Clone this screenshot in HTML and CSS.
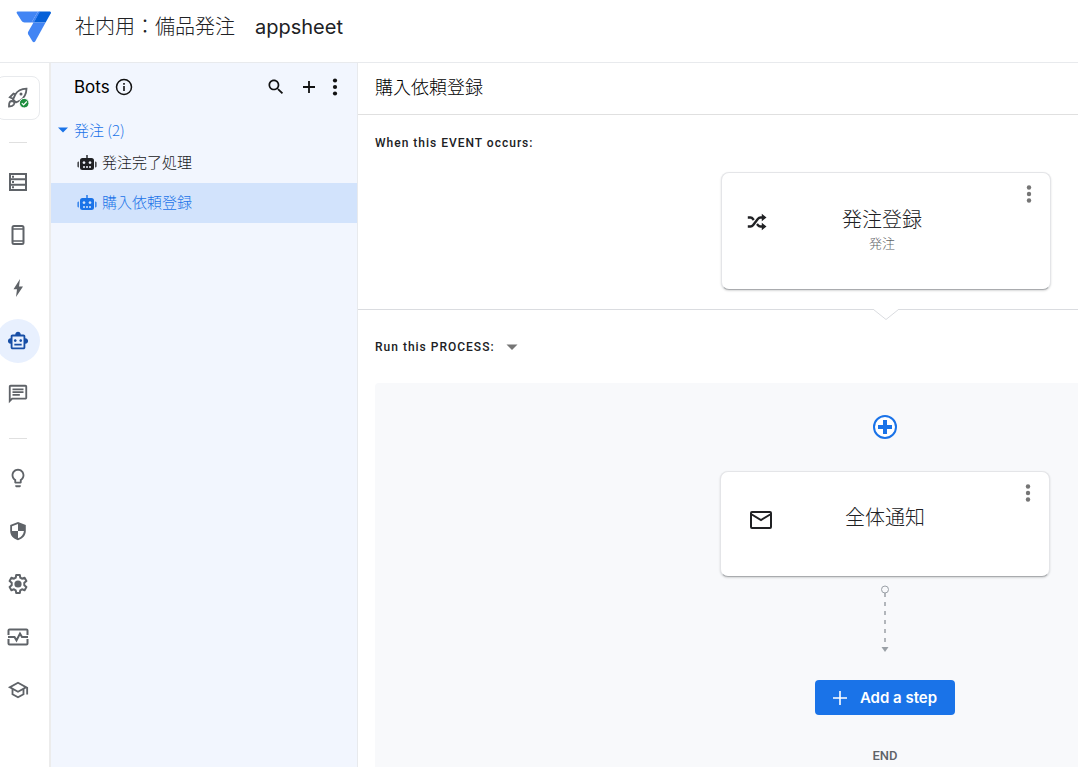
FILE: index.html
```html
<!DOCTYPE html>
<html lang="ja">
<head>
<meta charset="utf-8">
<meta name="viewport" content="width=device-width, initial-scale=1">
<title>AppSheet</title>
<link rel="stylesheet" href="styles.css">
</head>
<body>
<header class="topbar">
  <svg class="logo" width="36" height="32" viewBox="0 0 36 32" aria-label="AppSheet" role="img">
    <path fill="#4285f4" d="M1.600.500H22L15.500 11.500H8.500Q6.500 11.500 5.500 9.800L.800 2.200Q0 .5 1.600.500z"/>
    <path fill="#0560d8" d="M23.500.500H33.800Q35.600.700 34.800 2.300L29.600 11.500H17.500z"/>
    <path fill="#4285f4" d="M22 .500H24L18 11.500H15.500z"/>
    <path fill="#4285f4" d="M17.500 11.500H29.600L19.300 30.200Q17.900 32.200 16.400 30.200L12.200 23.200Q11.600 22 12.200 20.800z"/>
  </svg>
  <h1 class="app-title">社内用：備品発注　<span class="latin">appsheet</span></h1>
</header>
<div class="workspace">
  <nav class="rail" aria-label="Main">
    <button class="rail-item rail-deploy" aria-label="Deploy">
      <svg width="22" height="24" viewBox="0 0 22 24" fill="none" stroke="#5f6368" stroke-width="1.800">
        <path d="M6 13.500L8.300 8.500C10.500 4.700 14.500 2.900 19.500 2.700C19.300 7.700 17.300 11.700 13.500 14.200L9 16.500zM8.500 8.300L6.500 7.600L2.800 11.300L6.500 13M13.800 14.200L14.300 16"/>
        <path d="M2 20.500C1.900 17.500 2.600 15.200 4.600 15C7 15 7.900 16.700 6.900 18.400C6 19.800 4.200 20.400 2 20.500z"/>
        <circle cx="14" cy="8" r="1.500" fill="#5f6368" stroke="none"/>
        <circle cx="17.200" cy="17.200" r="4.800" fill="#1e8e3e" stroke="#fff" stroke-width="1"/>
        <path stroke="#fff" stroke-width="1.200" d="M14.800 17.200l1.800 1.800 3.200-3.500"/>
      </svg>
    </button>
    <hr class="rail-rule">
    <button class="rail-item" aria-label="Data">
      <svg width="22" height="22" viewBox="0 0 22 22"><path fill="none" stroke="#5f6368" stroke-width="2" d="M3 3h16v16H3zM3 8.300h16M3 13.700h16"/><path fill="#5f6368" d="M5 4.700h2v2H5zM5 10h2v2H5zM5 15.300h2v2H5z"/></svg>
    </button>
    <button class="rail-item" aria-label="Views">
      <svg width="22" height="22" viewBox="0 0 22 22"><rect x="5.500" y="2" width="11" height="18" rx="1.500" fill="none" stroke="#5f6368" stroke-width="2"/><path stroke="#5f6368" stroke-width="1.500" d="M5 5h12M5 17h12"/></svg>
    </button>
    <button class="rail-item" aria-label="Actions">
      <svg width="22" height="22" viewBox="0 0 22 22"><path fill="#5f6368" d="M13 2L6.500 12.300H10L9 20l7-10.500h-4z"/></svg>
    </button>
    <button class="rail-item is-active" aria-label="Automation" aria-current="page">
      <svg width="22" height="22" viewBox="0 0 24 24"><path fill="#174ea6" d="M20 9V7c0-1.100-.900-2-2-2h-3c0-1.660-1.340-3-3-3S9 3.340 9 5H6c-1.100 0-2 .900-2 2v2c-1.660 0-3 1.340-3 3s1.340 3 3 3v4c0 1.100.900 2 2 2h12c1.100 0 2-.900 2-2v-4c1.660 0 3-1.340 3-3s-1.340-3-3-3zm-2 10H6V7h12v12zm-9-6c-.830 0-1.500-.670-1.500-1.500S8.170 10 9 10s1.500.670 1.500 1.500S9.830 13 9 13zm7.500-1.500c0 .830-.670 1.500-1.500 1.500s-1.500-.670-1.500-1.500.670-1.500 1.500-1.500 1.500.670 1.500 1.500zM8 15h8v2H8v-2z"/></svg>
    </button>
    <button class="rail-item" aria-label="Chat">
      <svg width="22" height="22" viewBox="0 0 24 24"><path fill="#5f6368" d="M4 4h16v12H5.170L4 17.170V4m0-2c-1.100 0-1.990.900-1.990 2L2 22l4-4h14c1.100 0 2-.900 2-2V4c0-1.100-.900-2-2-2H4zm2 10h8v2H6v-2zm0-3h12v2H6V9zm0-3h12v2H6V6z"/></svg>
    </button>
    <hr class="rail-rule">
    <button class="rail-item" aria-label="Intelligence">
      <svg width="22" height="22" viewBox="0 0 24 24"><path fill="#5f6368" d="M9 21c0 .550.450 1 1 1h4c.550 0 1-.450 1-1v-1H9v1zm3-19C8.140 2 5 5.140 5 9c0 2.380 1.190 4.470 3 5.740V17c0 .550.450 1 1 1h6c.550 0 1-.450 1-1v-2.260c1.810-1.270 3-3.360 3-5.740 0-3.860-3.140-7-7-7zm2.850 11.100l-.850.600V16h-4v-2.300l-.850-.600C7.800 12.160 7 10.630 7 9c0-2.760 2.240-5 5-5s5 2.240 5 5c0 1.630-.800 3.160-2.150 4.100z"/></svg>
    </button>
    <button class="rail-item" aria-label="Security">
      <svg width="22" height="22" viewBox="0 0 24 24"><path fill="#5f6368" d="M12 2.200L3.500 5.500V12c0 4.700 3.300 8.600 8.500 10 5.200-1.400 8.500-5.300 8.500-10V5.500zM12 12h6.500c-.500 3.700-2.800 6.700-6.500 8v-8H5.500V6.800L12 4.300z"/></svg>
    </button>
    <button class="rail-item" aria-label="Settings">
      <svg width="24" height="24" viewBox="0 0 24 24"><path fill="none" stroke="#5f6368" stroke-width="2" stroke-linejoin="round" d="M10.200 3h3.600l.500 2.700 1.700 1 2.600-.900 1.800 3.100-2.100 1.800v2.600l2.100 1.800-1.800 3.100-2.600-.900-1.700 1-.500 2.700h-3.600l-.500-2.700-1.700-1-2.600.900-1.800-3.100 2.100-1.800v-2.600L3.600 8.900l1.800-3.100 2.600.900 1.700-1z"/><circle cx="12" cy="12" r="3.600" fill="#5f6368"/></svg>
    </button>
    <button class="rail-item" aria-label="Manage">
      <svg width="24" height="24" viewBox="0 0 24 24" fill="none" stroke="#5f6368" stroke-width="2"><path d="M2.500 10V5.500q0-1 1-1h17q1 0 1 1V10M2.500 14v4.500q0 1 1 1h17q1 0 1-1V14M2 12h6.500l2 3.500 3.500-7 2 3.500h6"/></svg>
    </button>
    <button class="rail-item" aria-label="Learn">
      <svg width="22" height="22" viewBox="0 0 24 24"><path fill="#5f6368" d="M12 3L1 9l4 2.180v6L12 21l7-3.820v-6l2-1.090V17h2V9L12 3zm6.820 6L12 12.720 5.180 9 12 5.280 18.820 9zM17 15.990l-5 2.730-5-2.730v-3.720L12 15l5-2.730v3.720z"/></svg>
    </button>
  </nav>

  <aside class="bots">
    <div class="bots-head">
      <h2 class="bots-title">Bots</h2>
      <button class="icon-btn" aria-label="About bots">
        <svg width="18" height="18" viewBox="0 0 18 18"><circle cx="9" cy="9" r="7.500" fill="none" stroke="#111" stroke-width="1.500"/><path fill="#111" d="M8.200 8h1.600v5H8.200zM8.200 5h1.600v1.700H8.200z"/></svg>
      </button>
      <div class="bots-tools">
        <button class="icon-btn" aria-label="Search">
          <svg width="20" height="20" viewBox="0 0 24 24"><path fill="#111" d="M15.500 14h-.790l-.280-.270C15.410 12.590 16 11.110 16 9.500 16 5.910 13.090 3 9.500 3S3 5.910 3 9.500 5.910 16 9.500 16c1.610 0 3.090-.590 4.230-1.570l.270.280v.790l5 4.990L20.490 19l-4.990-5zm-6 0C7.010 14 5 11.990 5 9.500S7.010 5 9.500 5 14 7.010 14 9.500 11.990 14 9.500 14z"/></svg>
        </button>
        <button class="icon-btn" aria-label="Create bot">
          <svg width="20" height="20" viewBox="0 0 20 20"><path stroke="#111" stroke-width="1.800" d="M10 4v12M4 10h12"/></svg>
        </button>
        <button class="icon-btn" aria-label="More">
          <svg width="6" height="20" viewBox="0 0 6 20" fill="#111"><circle cx="3" cy="3.500" r="2.100"/><circle cx="3" cy="10" r="2.100"/><circle cx="3" cy="16.500" r="2.100"/></svg>
        </button>
      </div>
    </div>
    <button class="group" aria-expanded="true">
      <svg width="10" height="6" viewBox="0 0 10 6"><path fill="#1a73e8" d="M0 .500h10L5 5.500z"/></svg>
      <span>発注 (2)</span>
    </button>
    <ul class="bot-list">
      <li><a class="bot" href="#">
        <svg class="bot-icon" width="20" height="16" viewBox="0 0 20 16"><path fill="currentColor" fill-rule="evenodd" d="M9.300 0h1.400v3H14.500q2.500 0 2.500 2.500v7q0 2.500-2.500 2.500h-9q-2.500 0-2.500-2.500v-7q0-2.500 2.500-2.500h3.800zM.500 7.500Q.700 6.500 1.800 6.500V12.500Q.700 12.500.500 11.500zM19.500 7.500Q19.300 6.500 18.200 6.500V12.500Q19.300 12.500 19.500 11.500zM7 6.200a1.400 1.400 0 1 0 .010 0zM13 6.200a1.400 1.400 0 1 0 .010 0zM6 11.300V12.800h2v-1.500zM9 11.300V12.800h2v-1.500zM12 11.300V12.800h2v-1.500z"/></svg>
        <span>発注完了処理</span></a></li>
      <li><a class="bot is-selected" href="#" aria-current="true">
        <svg class="bot-icon" width="20" height="16" viewBox="0 0 20 16"><path fill="currentColor" fill-rule="evenodd" d="M9.300 0h1.400v3H14.500q2.500 0 2.500 2.500v7q0 2.500-2.500 2.500h-9q-2.500 0-2.500-2.500v-7q0-2.500 2.500-2.500h3.800zM.500 7.500Q.700 6.500 1.800 6.500V12.500Q.700 12.500.500 11.500zM19.500 7.500Q19.300 6.500 18.200 6.500V12.500Q19.300 12.500 19.500 11.500zM7 6.200a1.400 1.400 0 1 0 .010 0zM13 6.200a1.400 1.400 0 1 0 .010 0zM6 11.300V12.800h2v-1.500zM9 11.300V12.800h2v-1.500zM12 11.300V12.800h2v-1.500z"/></svg>
        <span>購入依頼登録</span></a></li>
    </ul>
  </aside>

  <main class="editor">
    <h2 class="editor-title">購入依頼登録</h2>
    <section class="event">
      <h3 class="section-label">When this EVENT occurs:</h3>
      <div class="lane">
        <article class="card card-event">
          <svg class="card-icon" width="20" height="18" viewBox="0 0 20 18"><path fill="none" stroke="#202124" stroke-width="2.400" d="M.800 4.500H3.500Q5 4.500 6 6L6.800 7M.800 13.500H3.500Q5 13.500 6 12.200L11 5.800Q12 4.500 13.500 4.500H15M10 11l1 1.200Q12 13.500 13.500 13.500H15"/><path fill="#202124" d="M14.800.800L19.500 4.500l-4.700 3.700zM14.800 9.800l4.700 3.700-4.700 3.700z"/></svg>
          <div class="card-text"><strong class="card-title">発注登録</strong><span class="card-sub">発注</span></div>
          <button class="icon-btn card-menu" aria-label="Event options"><svg width="6" height="18" viewBox="0 0 6 18" fill="#757575"><circle cx="3" cy="2.500" r="2.200"/><circle cx="3" cy="9" r="2.200"/><circle cx="3" cy="15.500" r="2.200"/></svg></button>
        </article>
      </div>
      <svg class="notch" width="28" height="12" viewBox="0 0 28 12"><path fill="#fff" stroke="#fff" d="M2 .500H26"/><path fill="#fff" stroke="#dadce0" d="M0 .500H1.500L14 10.500L26.500.500H28"/></svg>
    </section>
    <section class="process">
      <h3 class="section-label"><button class="process-toggle">Run this PROCESS:<svg width="12" height="6" viewBox="0 0 12 6"><path fill="#757575" d="M.500.500h11L6 6z"/></svg></button></h3>
      <div class="canvas">
        <div class="steps">
          <button class="icon-btn" aria-label="Insert step"><svg width="26" height="26" viewBox="0 0 26 26"><circle cx="13" cy="13" r="11" fill="#fff" stroke="#1a73e8" stroke-width="2"/><path stroke="#1a73e8" stroke-width="4" d="M13 6v14M6 13h14"/></svg></button>
          <article class="card card-step">
            <svg class="card-icon" width="24" height="18" viewBox="0 0 24 18"><rect x="2" y="1" width="20" height="16" rx="1" fill="none" stroke="#202124" stroke-width="2"/><path fill="none" stroke="#202124" stroke-width="2" d="M2 3l10 6 10-6"/></svg>
            <div class="card-text"><strong class="card-title">全体通知</strong></div>
            <button class="icon-btn card-menu" aria-label="Step options"><svg width="6" height="18" viewBox="0 0 6 18" fill="#757575"><circle cx="3" cy="2.500" r="2.200"/><circle cx="3" cy="9" r="2.200"/><circle cx="3" cy="15.500" r="2.200"/></svg></button>
          </article>
          <svg class="connector" width="10" height="68" viewBox="0 0 10 68"><circle cx="5" cy="4.500" r="3.500" fill="none" stroke="#9aa0a6"/><path stroke="#9aa0a6" stroke-width="1.500" stroke-dasharray="4 5" d="M5 8v54"/><path fill="#9aa0a6" d="M1.500 62h7L5 67z"/></svg>
          <button class="add-step"><svg width="14" height="14" viewBox="0 0 14 14"><path stroke="#fff" stroke-width="1.600" d="M7 0v14M0 7h14"/></svg>Add a step</button>
          <p class="end">END</p>
        </div>
      </div>
    </section>
  </main>
</div>
</body>
</html>
```
FILE: styles.css
```css
* { box-sizing: border-box; }

body {
  margin: 0;
  height: 100vh;
  display: flex;
  flex-direction: column;
  overflow: hidden;
  background: #fff;
  color: #202124;
  font-family: Inter, "Noto Sans CJK JP", sans-serif;
}

h1, h2, h3, p, ul { margin: 0; padding: 0; }
button { border: 0; padding: 0; background: none; font: inherit; color: inherit; cursor: pointer; }
svg { display: block; flex: none; }

.topbar {
  flex: none;
  display: flex;
  align-items: center;
  gap: 23px;
  height: 63px;
  padding: 0 16px 9px;
  border-bottom: 1px solid #e8eaed;
}
.app-title {
  font-size: 20px;
  line-height: 28px;
  font-weight: 300;
}
.latin { font-weight: 400; }

.workspace { flex: 1; display: flex; min-height: 0; }

.rail {
  flex: none;
  display: flex;
  flex-direction: column;
  gap: 9px;
  width: 51px;
  padding-top: 13px;
  border-right: 2px solid #ececec;
}
.rail-item {
  flex: none;
  display: grid;
  place-items: center;
  width: 44px;
  height: 44px;
  margin-left: -4px;
  border-radius: 50%;
}
.rail-deploy { border: 1px solid #e8eaed; border-radius: 8px; }
.rail-item.is-active { background: #e8f0fe; }
.rail-rule {
  flex: none;
  width: 18px;
  height: 1px;
  margin: 13px 0 8px 9px;
  border: 0;
  background: #e0e0e0;
}

.bots {
  flex: none;
  width: 307px;
  background: #f2f6fe;
  border-right: 1px solid #e8eaed;
}
.bots-head {
  display: flex;
  align-items: center;
  gap: 5px;
  height: 48px;
  padding: 0 19px 0 23px;
}
.bots-title {
  font-size: 17px;
  line-height: 24px;
  font-weight: 400;
  color: #000;
}
.bots-tools { display: flex; align-items: center; gap: 13px; margin-left: auto; }
.group {
  display: flex;
  align-items: center;
  gap: 6px;
  width: 100%;
  height: 32px;
  padding: 6px 7px 0;
  color: #1a73e8;
  font-family: "Noto Sans CJK JP", sans-serif;
  font-size: 15px;
  line-height: 24px;
  font-weight: 300;
}
.bot-list { list-style: none; }
.bot {
  display: flex;
  align-items: center;
  gap: 5px;
  height: 40px;
  padding-left: 26px;
  color: #202124;
  font-size: 15px;
  line-height: 24px;
  font-weight: 300;
  text-decoration: none;
}
.bot.is-selected { background: #d2e3fc; color: #1a73e8; }

.editor { flex: 1; min-width: 0; display: flex; flex-direction: column; }
.editor-title {
  height: 52px;
  padding: 12px 17px;
  border-bottom: 1px solid #e0e0e0;
  font-size: 18px;
  line-height: 26px;
  font-weight: 300;
  color: #000;
}
.section-label {
  font-family: Roboto, sans-serif;
  font-size: 12px;
  line-height: 20px;
  font-weight: 500;
  letter-spacing: 1px;
}
.event {
  position: relative;
  padding: 18px 27px 19px 17px;
  border-bottom: 1px solid #dadce0;
}
.lane { display: flex; justify-content: flex-end; padding-top: 19px; }
.notch { position: absolute; right: 178px; bottom: -12px; }

.card {
  position: relative;
  display: flex;
  width: 330px;
  background: #fff;
  border: 1px solid #e4e5e8;
  border-bottom-color: #a9abae;
  border-radius: 8px;
  box-shadow: 0 1px 2px rgba(60, 64, 67, .2);
}
.card-event { height: 118px; padding: 34px 25px; }
.card-step { height: 106px; padding: 33px 28px; }
.card-icon { margin-top: 6px; }
.card-text { flex: 1; display: flex; flex-direction: column; align-items: center; padding-right: 50px; padding-left: 22px; }
.card-title { font-size: 20px; line-height: 26px; font-weight: 300; }
.card-sub { font-size: 13px; line-height: 20px; font-weight: 300; color: #5f6368; }
.card-menu { position: absolute; top: 12px; right: 18px; }

.process { flex: 1; display: flex; flex-direction: column; padding: 27px 0 0 17px; }
.process-toggle { display: flex; align-items: center; gap: 11px; letter-spacing: inherit; }
.canvas {
  flex: 1;
  display: flex;
  justify-content: flex-end;
  margin-top: 26px;
  padding: 31px 28px 0 0;
  border-radius: 4px 0 0 0;
  background: #f8f9fb;
}
.steps { display: flex; flex-direction: column; align-items: center; }
.card-step { margin-top: 31px; }
.card-step .card-text { padding-left: 26px; }
.connector { margin-top: 8px; }
.add-step {
  display: flex;
  align-items: center;
  gap: 13px;
  height: 35px;
  margin-top: 27px;
  padding: 0 18px;
  border-radius: 4px;
  background: #1a73e8;
  color: #fff;
  font-size: 15px;
  line-height: 20px;
  font-weight: 600;
}
.end {
  margin-top: 31px;
  color: #5f6368;
  font-family: Roboto, sans-serif;
  font-size: 13px;
  line-height: 20px;
  font-weight: 500;
}
```
